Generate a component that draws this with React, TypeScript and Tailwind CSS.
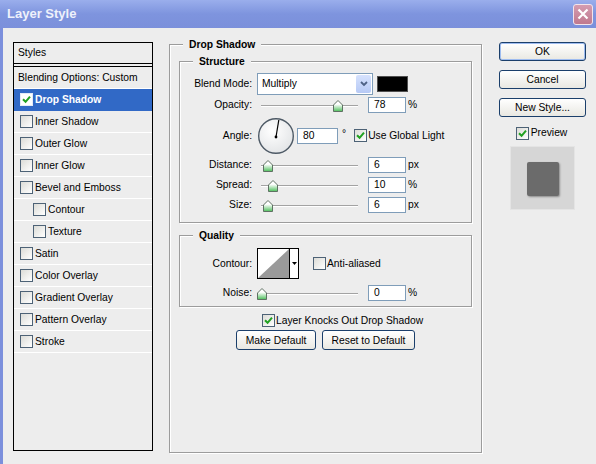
import React from "react";

const styleItems = [
  { label: "Drop Shadow", checked: true, selected: true },
  { label: "Inner Shadow" },
  { label: "Outer Glow" },
  { label: "Inner Glow" },
  { label: "Bevel and Emboss" },
  { label: "Contour", indent: true },
  { label: "Texture", indent: true },
  { label: "Satin" },
  { label: "Color Overlay" },
  { label: "Gradient Overlay" },
  { label: "Pattern Overlay" },
  { label: "Stroke" },
];

function CheckBox({ checked, light }: { checked?: boolean; light?: boolean }) {
  return (
    <span
      className={
        light
          ? "flex h-[13px] w-[13px] shrink-0 items-center justify-center border border-[#e4ebf7] bg-white"
          : "flex h-[13px] w-[13px] shrink-0 items-center justify-center border border-[#4d6276] bg-gradient-to-br from-[#dcdcd7] to-white"
      }
    >
      {checked && (
        <svg width="9" height="9" viewBox="0 0 9 9">
          <path d="M1 4.2 L3.6 6.8 L8 1.6" stroke="#21a121" strokeWidth="2" fill="none" />
        </svg>
      )}
    </span>
  );
}

function XpButton({ children, className, isDefault }: { children: React.ReactNode; className: string; isDefault?: boolean }) {
  return (
    <button
      className={
        "flex items-center justify-center rounded-[3px] border border-[#1b3f6b] bg-gradient-to-b from-white to-[#e9e8e2] leading-[13px] text-black " +
        (isDefault ? "shadow-[inset_0_0_0_1px_#9ebcf0] " : "") +
        className
      }
    >
      {children}
    </button>
  );
}

function Thumb({ left }: { left: number }) {
  return (
    <svg className="absolute top-[3px]" style={{ left }} width="10" height="12" viewBox="0 0 10 12">
      <defs>
        <linearGradient id="thumbFill" x1="0" y1="0" x2="0" y2="1">
          <stop offset="0.35" stopColor="#ffffff" />
          <stop offset="1" stopColor="#4cbf5a" />
        </linearGradient>
      </defs>
      <path d="M5 0.5 L9.5 5 V11.5 H0.5 V5 Z" fill="url(#thumbFill)" stroke="#5f7163" />
    </svg>
  );
}

function Slider({ thumb }: { thumb: number }) {
  return (
    <div className="relative h-[16px] w-[101px] shrink-0">
      <div className="absolute left-[4px] right-0 top-[8px] h-[2px] border-t border-b border-t-[#a3a3a3] border-b-white" />
      <Thumb left={thumb} />
    </div>
  );
}

function NumBox({ value, className }: { value: string; className: string }) {
  return (
    <div className={"h-[16px] shrink-0 border border-[#7f9db9] bg-white pl-[5px] leading-[14px] " + className}>{value}</div>
  );
}

function Label({ children }: { children: React.ReactNode }) {
  return <span className="w-[73px] shrink-0 pr-[1px] text-right">{children}</span>;
}

function SliderRow({ label, thumb, value, unit, className }: { label: string; thumb: number; value: string; unit: string; className: string }) {
  return (
    <div className={"flex h-[16px] items-center " + className}>
      <Label>{label}</Label>
      <div className="ml-[4px]">
        <Slider thumb={thumb} />
      </div>
      <NumBox value={value} className="ml-[10px] w-[38px]" />
      <span className="ml-[2px]">{unit}</span>
    </div>
  );
}

function GroupBox({ title, className, children }: { title: string; className: string; children: React.ReactNode }) {
  return (
    <div className={"relative border border-[#9c9c9c] shadow-[inset_1px_1px_0_#fff,1px_1px_0_#fff] " + className}>
      <span className="absolute -top-[7px] left-[13px] bg-[#ededed] px-[6px] font-bold leading-[13px]">{title}</span>
      {children}
    </div>
  );
}

export default function App() {
  return (
    <div className="flex h-[464px] w-[596px] flex-col overflow-hidden bg-[#ededed] font-['Liberation_Sans',Arial,sans-serif] text-[10.3px] text-black">
      {/* title bar */}
      <div className="flex h-[28px] shrink-0 items-center bg-gradient-to-b from-[#9aaeec] via-[#7e94de] to-[#7b90db] pl-[7px] pr-[3px]">
        <span className="text-[13px] font-bold leading-[16px] text-[#eef1fb]">Layer Style</span>
        <div className="ml-auto flex h-[21px] w-[20px] items-center justify-center rounded-[3px] border border-[#f3e4ea] bg-gradient-to-b from-[#d49cb0] to-[#c0798f]">
          <svg width="12" height="12" viewBox="0 0 12 12">
            <path d="M1.5 1.5 L10.5 10.5 M10.5 1.5 L1.5 10.5" stroke="#fff" strokeWidth="2.2" />
          </svg>
        </div>
      </div>

      <div className="flex flex-1">
        <div className="w-[3px] bg-[#7b8fdc]" />
        <div className="flex flex-1 items-start pl-[10px] pt-[14px]">
          {/* styles list */}
          <div className="flex h-[409px] w-[140px] shrink-0 flex-col border border-black">
            <div className="flex h-[20px] items-center pl-[4px]">Styles</div>
            <div className="h-[4px] border-y border-black" />
            <div className="flex h-[22px] items-center border-b border-white pl-[4px]">Blending Options: Custom</div>
            {styleItems.map((item) => (
              <div
                key={item.label}
                className={
                  "flex h-[22px] items-center gap-[2px] border-b " +
                  (item.selected ? "border-[#3169c6] bg-[#3169c6] font-bold text-white " : "border-white ") +
                  (item.indent ? "pl-[19px]" : "pl-[6px]")
                }
              >
                <CheckBox checked={item.checked} light={item.selected} />
                <span>{item.label}</span>
              </div>
            ))}
          </div>

          {/* drop shadow settings */}
          <GroupBox title="Drop Shadow" className="ml-[16px] mt-[2px] h-[409px] w-[313px] shrink-0 px-[9px] pt-[16px]">
            <GroupBox title="Structure" className="pb-[9px]">
              <div className="mt-[11px] flex h-[22px] items-center">
                <Label>Blend Mode:</Label>
                <div className="ml-[4px] flex h-[22px] w-[116px] items-stretch border border-[#7f9db9] bg-white">
                  <span className="flex flex-1 items-center pl-[4px]">Multiply</span>
                  <span className="my-[1px] mr-[1px] flex w-[15px] items-center justify-center rounded-[2px] bg-gradient-to-b from-[#d6e2fd] to-[#b6c9f5]">
                    <svg width="8" height="6" viewBox="0 0 8 6">
                      <path d="M1 1 L4 4 L7 1" stroke="#4d6185" strokeWidth="1.8" fill="none" />
                    </svg>
                  </span>
                </div>
                <div className="ml-[4px] h-[16px] w-[31px] border border-[#505050] bg-black" />
              </div>
              <SliderRow label="Opacity:" thumb={76} value="78" unit="%" className="mt-[2px]" />
              <div className="mt-[4px] flex h-[37px] items-center">
                <Label>Angle:</Label>
                <svg className="ml-[4px] shrink-0" width="38" height="38" viewBox="0 0 38 38">
                  <defs>
                    <radialGradient id="dialFill" cx="40%" cy="35%" r="70%">
                      <stop offset="0" stopColor="#ffffff" />
                      <stop offset="1" stopColor="#e2e4e6" />
                    </radialGradient>
                  </defs>
                  <circle cx="19" cy="19" r="17.3" fill="url(#dialFill)" stroke="#4e5a66" strokeWidth="1.4" />
                  <line x1="19" y1="20" x2="21.8" y2="3" stroke="#000" strokeWidth="1.2" />
                  <circle cx="19" cy="20" r="1.4" fill="#000" />
                </svg>
                <NumBox value="80" className="ml-[2px] w-[41px]" />
                <span className="ml-[4px] self-start pt-[9px]">°</span>
                <span className="ml-[8px]">
                  <CheckBox checked />
                </span>
                <span className="ml-[1px]">Use Global Light</span>
              </div>
              <SliderRow label="Distance:" thumb={6} value="6" unit="px" className="mt-[3px]" />
              <SliderRow label="Spread:" thumb={11} value="10" unit="%" className="mt-[4px]" />
              <SliderRow label="Size:" thumb={6} value="6" unit="px" className="mt-[4px]" />
            </GroupBox>

            <GroupBox title="Quality" className="mt-[12px] pb-[5px] pt-[12px]">
              <div className="flex h-[31px] items-center">
                <Label>Contour:</Label>
                <div className="ml-[4px] flex h-[31px] w-[42px] border border-black bg-white">
                  <svg width="31" height="29" viewBox="0 0 31 29">
                    <polygon points="0,29 31,0 31,29" fill="#9a9a9a" />
                  </svg>
                  <div className="flex flex-1 items-center justify-center border-l border-black">
                    <svg width="5" height="3" viewBox="0 0 5 3">
                      <polygon points="0,0 5,0 2.5,3" fill="#000" />
                    </svg>
                  </div>
                </div>
                <span className="ml-[14px]">
                  <CheckBox />
                </span>
                <span className="ml-[1px]">Anti-aliased</span>
              </div>
              <SliderRow label="Noise:" thumb={0} value="0" unit="%" className="mt-[6px]" />
            </GroupBox>

            <div className="ml-[83px] mt-[7px] flex h-[13px] items-center gap-[1px]">
              <CheckBox checked />
              <span>Layer Knocks Out Drop Shadow</span>
            </div>
            <div className="mt-[3px] flex justify-center gap-[6px]">
              <XpButton className="h-[20px] w-[80px]">Make Default</XpButton>
              <XpButton className="h-[20px] w-[93px]">Reset to Default</XpButton>
            </div>
          </GroupBox>

          {/* buttons and preview */}
          <div className="ml-[17px] flex w-[87px] shrink-0 flex-col items-center">
            <XpButton isDefault className="h-[19px] w-[87px]">OK</XpButton>
            <XpButton className="mt-[9px] h-[19px] w-[87px]">Cancel</XpButton>
            <XpButton className="mt-[9px] h-[19px] w-[87px]">New Style...</XpButton>
            <div className="mt-[8px] flex h-[16px] items-center gap-[2px] pr-[2px]">
              <CheckBox checked />
              <span>Preview</span>
            </div>
            <div className="mt-[5px] flex h-[64px] w-[65px] items-center justify-center border border-[#e4e4e4] bg-[#d6d6d6]">
              <div className="mt-[2px] h-[34px] w-[32px] rounded-[2px] bg-[#6b6b6b] shadow-[1px_1px_2px_rgba(0,0,0,0.35)]" />
            </div>
          </div>
        </div>
      </div>
    </div>
  );
}
